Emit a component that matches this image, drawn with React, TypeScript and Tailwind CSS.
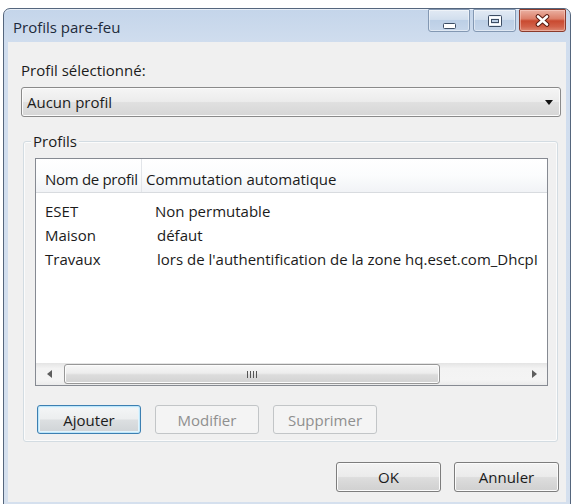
import React from "react";

type BtnVariant = "default" | "normal" | "disabled";

function DlgButton({ label, variant, w, h }: { label: string; variant: BtnVariant; w: string; h: string }) {
  const base = "flex items-center justify-center rounded-[3px] border text-[15px] leading-[18px]";
  let cls = "";
  if (variant === "default") {
    cls =
      "border-[#3c7fb1] text-[#1b1b1b] bg-[linear-gradient(to_bottom,#f4f6f7,#eceeef_48%,#dcdfe1_52%,#cfd3d6)] shadow-[inset_0_0_0_1px_#bde6fa,inset_0_0_0_2px_#e4f4fc]";
  } else if (variant === "normal") {
    cls =
      "border-[#7d7d7d] text-[#1b1b1b] bg-[linear-gradient(to_bottom,#f3f3f3,#ebebeb_48%,#dddddd_52%,#d0d0d0)] shadow-[inset_0_0_0_1px_#fbfbfb]";
  } else {
    cls = "border-[#c2c5c7] text-[#8f8f8f] bg-[#f4f4f4]";
  }
  return <div className={`${base} ${cls} ${w} ${h}`}>{label}</div>;
}

function MinGlyph() {
  return (
    <svg width="13" height="6" viewBox="0 0 13 6">
      <rect x="0.5" y="0.5" width="12" height="5" rx="1" fill="#ffffff" stroke="#3c4d64" />
    </svg>
  );
}

function MaxGlyph() {
  return (
    <svg width="14" height="12" viewBox="0 0 14 12">
      <rect x="0.5" y="0.5" width="13" height="11" rx="1" fill="none" stroke="#3c4d64" />
      <rect x="2" y="2.5" width="10" height="7" fill="none" stroke="#ffffff" strokeWidth="2" />
      <rect x="3.5" y="4.5" width="7" height="3" fill="none" stroke="#3c4d64" />
    </svg>
  );
}

function CloseGlyph() {
  return (
    <svg width="15" height="13" viewBox="0 0 15 13">
      <path d="M3 2.5 L12 10.5 M12 2.5 L3 10.5" stroke="#5a1c12" strokeWidth="4.6" strokeLinecap="round" />
      <path d="M3 2.5 L12 10.5 M12 2.5 L3 10.5" stroke="#ffffff" strokeWidth="2.6" strokeLinecap="round" />
    </svg>
  );
}

function ArrowLeft() {
  return (
    <svg width="5" height="8" viewBox="0 0 5 8">
      <path d="M5 0 L0 4 L5 8 Z" fill="#5e5e5e" />
    </svg>
  );
}

function ArrowRight() {
  return (
    <svg width="5" height="8" viewBox="0 0 5 8">
      <path d="M0 0 L5 4 L0 8 Z" fill="#5e5e5e" />
    </svg>
  );
}

const rows: [string, string, string][] = [
  ["ESET", "Non permutable", "pl-[13px]"],
  ["Maison", "défaut", "pl-[15px]"],
  ["Travaux", "lors de l'authentification de la zone hq.eset.com_DhcpI", "pl-[15px]"],
];

const capBtn =
  "h-[23px] rounded-b-[3px] rounded-t-[1px] border border-[#8398b3] bg-[linear-gradient(to_bottom,#e2eaf4,#d2dfee_45%,#bccfe6_50%,#c6d6ea)] shadow-[inset_0_0_0_1px_rgba(255,255,255,0.45)] flex justify-center";

export default function App() {
  return (
    <div className="w-[575px] h-[504px] overflow-hidden bg-white font-['Open_Sans',sans-serif] text-[15px] leading-[18px] text-[#1b1b1b]">
      <div className="pl-[3px] pt-[8px]">
        <div className="w-[568px] h-[498px] rounded-t-[7px] border border-[#55667d] bg-[linear-gradient(to_bottom,#c4d5ea,#d0ddee_34px,#d5e0ee)] px-[4px] pb-[3px] flex flex-col shadow-[inset_0_1px_0_#e8eff8]">
          {/* Title bar */}
          <div className="h-[33px] shrink-0 flex items-start">
            <div className="flex-1 pl-[5px] pt-[8px] text-[15px] leading-[20px] text-[#1d2a3b]">Profils pare-feu</div>
            <div className="flex gap-[3px]">
              <div className={`${capBtn} w-[42px] items-end pb-[2px]`}>
                <MinGlyph />
              </div>
              <div className={`${capBtn} w-[43px] items-center`}>
                <MaxGlyph />
              </div>
              <div className="w-[47px] h-[23px] rounded-b-[3px] rounded-t-[1px] border border-[#8a3a2c] bg-[linear-gradient(to_bottom,#eab0a2,#dc7f69_42%,#c94a30_52%,#d2624a_80%,#dd8a74)] shadow-[inset_0_0_0_1px_rgba(255,220,210,0.45)] flex items-center justify-center">
                <CloseGlyph />
              </div>
            </div>
          </div>

          {/* Client area */}
          <div className="flex-1 bg-[#f0f0f0] pl-[13px] pr-[5px] flex flex-col">
            <div className="mt-[19px] h-[18px]">Profil sélectionné:</div>

            <div className="mt-[8px] h-[30px] shrink-0 rounded-[3px] border border-[#8a8a8a] bg-[linear-gradient(to_bottom,#f5f5f5,#ececec_48%,#e0e0e0_52%,#d6d6d6)] shadow-[inset_0_0_0_1px_#fbfbfb] flex items-center justify-between pl-[5px] pr-[7px]">
              <span>Aucun profil</span>
              <svg width="8" height="5" viewBox="0 0 8 5">
                <path d="M0 0 H8 L4 5 Z" fill="#111111" />
              </svg>
            </div>

            {/* Group box */}
            <div className="relative mt-[24px] ml-[2px] mr-[3px] h-[301px] shrink-0 rounded-[3px] border border-[#d3dce2] shadow-[inset_0_0_0_1px_#fbfbfb] pt-[16px] pl-[11px] pr-[9px] pb-[7px] flex flex-col">
              <span className="absolute left-[7px] top-[-10px] px-[2px] bg-[#f0f0f0] leading-[18px]">Profils</span>

              {/* List view */}
              <div className="h-[228px] shrink-0 border border-[#868a92] bg-white flex flex-col overflow-hidden">
                <div className="h-[34px] shrink-0 flex border-b border-[#d8dbdf] bg-[linear-gradient(to_bottom,#ffffff,#fbfcfd_50%,#f1f3f6)]">
                  <div className="w-[106px] shrink-0 border-r border-[#e2e5e9] pl-[9px] pt-[6px] flex items-center whitespace-nowrap overflow-hidden tracking-[-0.3px]">
                    Nom de profil
                  </div>
                  <div className="pl-[4px] pt-[6px] flex items-center whitespace-nowrap">Commutation automatique</div>
                </div>
                <div className="flex-1 pt-[6px] overflow-hidden">
                  {rows.map(([a, b, pad]) => (
                    <div key={a} className="h-[24px] flex items-center whitespace-nowrap">
                      <div className="w-[106px] shrink-0 pl-[9px]">{a}</div>
                      <div className={pad}>{b}</div>
                    </div>
                  ))}
                </div>
                {/* Horizontal scrollbar */}
                <div className="h-[22px] shrink-0 flex items-stretch bg-[linear-gradient(to_bottom,#e4e4e4,#f3f3f3_25%,#f4f4f4_75%,#ebebeb)]">
                  <div className="w-[26px] shrink-0 flex items-center justify-center">
                    <ArrowLeft />
                  </div>
                  <div className="flex-1 flex items-stretch py-[1px] pl-[2px]">
                    <div className="w-[376px] rounded-[3px] border border-[#979797] bg-[linear-gradient(to_bottom,#f7f7f7,#ededed_45%,#dcdcdc_55%,#d2d2d2)] shadow-[inset_0_0_0_1px_#fcfcfc] flex items-center justify-center gap-[2px]">
                      <span className="w-[1px] h-[7px] bg-[#555]" />
                      <span className="w-[1px] h-[7px] bg-[#555]" />
                      <span className="w-[1px] h-[7px] bg-[#555]" />
                      <span className="w-[1px] h-[7px] bg-[#555]" />
                    </div>
                  </div>
                  <div className="w-[26px] shrink-0 flex items-center justify-center">
                    <ArrowRight />
                  </div>
                </div>
              </div>

              <div className="mt-[19px] ml-[2px] flex gap-[14px]">
                <DlgButton label="Ajouter" variant="default" w="w-[104px]" h="h-[29px]" />
                <DlgButton label="Modifier" variant="disabled" w="w-[104px]" h="h-[29px]" />
                <DlgButton label="Supprimer" variant="disabled" w="w-[104px]" h="h-[29px]" />
              </div>
            </div>

            <div className="mt-[20px] pr-[2px] flex justify-end gap-[13px]">
              <DlgButton label="OK" variant="normal" w="w-[105px]" h="h-[30px]" />
              <DlgButton label="Annuler" variant="normal" w="w-[105px]" h="h-[30px]" />
            </div>
          </div>
        </div>
      </div>
    </div>
  );
}
